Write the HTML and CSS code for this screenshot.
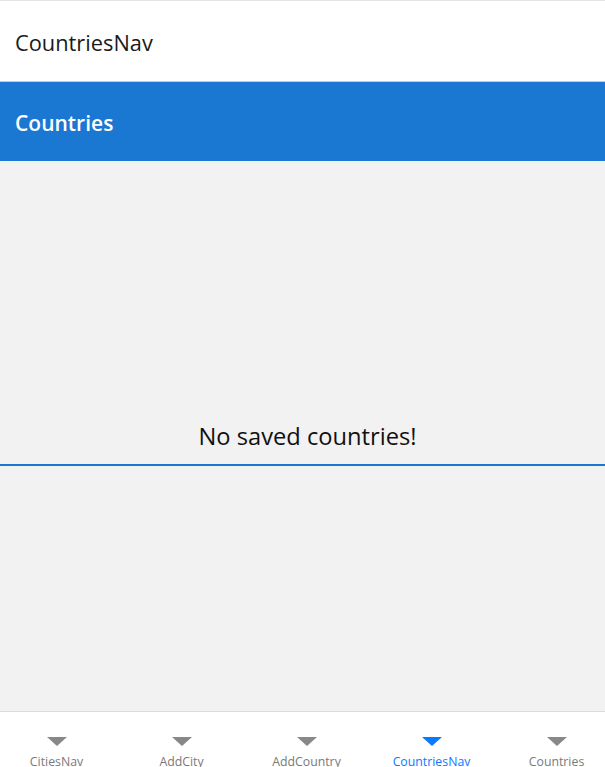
FILE: index.html
```html
<!DOCTYPE html>
<html>
<head>
<meta charset="utf-8">
<link rel="stylesheet" href="styles.css">
</head>
<body>
<div class="app">
  <header class="navbar"><span class="nav-title">CountriesNav</span></header>
  <div class="titlebar"><span class="page-title">Countries</span></div>
  <main class="content">
    <div class="empty">
      <div class="empty-text">No saved countries!</div>
      <div class="empty-line"></div>
    </div>
  </main>
  <nav class="tabs">
    <div class="tab"><span class="tri"></span><span class="tab-label">CitiesNav</span></div>
    <div class="tab"><span class="tri"></span><span class="tab-label">AddCity</span></div>
    <div class="tab"><span class="tri"></span><span class="tab-label">AddCountry</span></div>
    <div class="tab active"><span class="tri"></span><span class="tab-label">CountriesNav</span></div>
    <div class="tab"><span class="tri"></span><span class="tab-label">Countries</span></div>
  </nav>
</div>
</body>
</html>
```

FILE: styles.css
```css
html, body {
  margin: 0;
  padding: 0;
  height: 100%;
  overflow: hidden;
}
body {
  font-family: "Open Sans", "Noto Sans", sans-serif;
  background: #ffffff;
}
.app {
  display: flex;
  flex-direction: column;
  height: 767px;
}
.navbar {
  height: 80px;
  border-top: 1px solid #e3e3e3;
  background: #ffffff;
  display: flex;
  align-items: center;
  padding-left: 15px;
  flex: none;
}
.nav-title {
  font-size: 21.8px;
  color: #1a1a1a;
  padding-top: 2px;
}
.titlebar {
  height: 79px;
  border-top: 1px solid #b9cfe6;
  background: #1a77d2;
  display: flex;
  align-items: center;
  padding-left: 15px;
  flex: none;
}
.page-title {
  font-size: 21px;
  font-weight: 600;
  color: #ffffff;
  padding-top: 2px;
}
.content {
  flex: 1;
  background: #f2f2f2;
  display: flex;
  flex-direction: column;
  justify-content: flex-start;
  padding-top: 258px;
}
.empty-text {
  text-align: center;
  font-size: 23.7px;
  color: #111111;
  line-height: 34px;
  padding-left: 10px;
}
.empty-line {
  height: 2px;
  background: #1a77d2;
  margin-top: 11px;
}
.tabs {
  height: 55px;
  flex: none;
  border-top: 1px solid #dcdcdc;
  background: #ffffff;
  display: grid;
  grid-template-columns: repeat(5, 125px);
  margin-left: -6px;
  width: 625px;
}
.tab {
  display: flex;
  flex-direction: column;
  align-items: center;
  padding-top: 25px;
}
.tri {
  width: 0;
  height: 0;
  border-left: 10px solid transparent;
  border-right: 10px solid transparent;
  border-top: 9px solid #888888;
}
.tab-label {
  font-size: 12.3px;
  color: #7a7a7a;
  margin-top: 8px;
  line-height: 16px;
}
.tab.active .tri {
  border-top-color: #0a7aff;
}
.tab.active .tab-label {
  color: #0a7aff;
}
```
